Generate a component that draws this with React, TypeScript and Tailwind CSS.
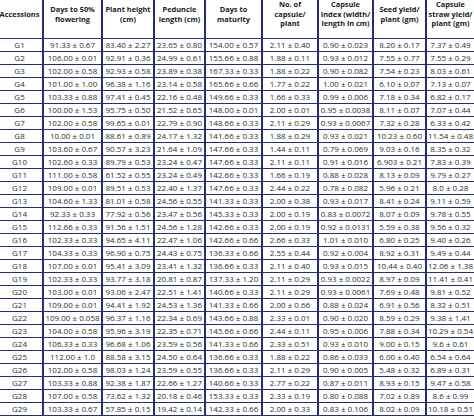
const GRID = 'grid grid-cols-[47px_59px_52px_51px_57px_56px_55px_53px_49px]';

const HEADERS: string[][] = [
  ['Accessions'],
  ['Days to 50%', 'flowering'],
  ['Plant height', '(cm)'],
  ['Peduncle', 'length (cm)'],
  ['Days to', 'maturity'],
  ['No. of', 'capsule/', 'plant'],
  ['Capsule', 'Index (width/', 'length in cm)'],
  ['Seed yield/', 'plant (gm)'],
  ['Capsule', 'straw yield/', 'plant (gm)'],
];

const ROWS: string[][] = [
  ['91.33 ± 0.67', '83.40 ± 2.27', '23.65 ± 0.80', '154.00 ± 0.57', '2.11 ± 0.40', '0.90 ± 0.023', '8.20 ± 0.17', '7.37 ± 0.49'],
  ['106.00 ± 0.01', '92.91 ± 0.36', '24.99 ± 0.61', '155.66 ± 0.88', '1.88 ± 0.11', '0.93 ± 0.012', '7.55 ± 0.77', '7.55 ± 0.29'],
  ['102.00 ± 0.58', '92.93 ± 0.58', '23.89 ± 0.38', '167.33 ± 0.33', '1.88 ± 0.22', '0.90 ± 0.082', '7.54 ± 0.23', '8.03 ± 0.61'],
  ['101.00 ± 1.00', '96.38 ± 1.16', '23.14 ± 0.58', '165.66 ± 0.66', '1.77 ± 0.22', '1.00 ± 0.021', '6.10 ± 0.07', '7.13 ± 0.07'],
  ['103.33 ± 0.88', '97.41 ± 0.45', '22.16 ± 0.48', '149.66 ± 0.33', '1.66 ± 0.33', '0.99 ± 0.006', '7.18 ± 0.34', '6.82 ± 0.17'],
  ['100.00 ± 1.53', '95.75 ± 0.50', '21.52 ± 0.65', '148.00 ± 0.01', '2.00 ± 0.01', '0.95 ± 0.0038', '8.11 ± 0.07', '7.07 ± 0.44'],
  ['102.00 ± 0.58', '99.65 ± 0.01', '22.79 ± 0.90', '148.66 ± 0.33', '2.11 ± 0.29', '0.93 ± 0.0067', '7.32 ± 0.28', '6.33 ± 0.42'],
  ['10.00 ± 0.01', '88.61 ± 0.89', '24.17 ± 1.32', '141.66 ± 0.33', '1.88 ± 0.29', '0.93 ± 0.021', '10.23 ± 0.60', '11.54 ± 0.48'],
  ['103.60 ± 0.67', '90.57 ± 3.23', '21.64 ± 1.09', '147.66 ± 0.33', '1.44 ± 0.11', '0.79 ± 0.069', '9.03 ± 0.16', '8.35 ± 0.32'],
  ['102.60 ± 0.33', '89.79 ± 0.53', '23.24 ± 0.47', '147.66 ± 0.33', '2.11 ± 0.11', '0.91 ± 0.016', '6.903 ± 0.21', '7.83 ± 0.39'],
  ['111.00 ± 0.58', '61.52 ± 0.55', '23.24 ± 0.49', '142.66 ± 0.33', '1.66 ± 0.19', '0.88 ± 0.028', '8.13 ± 0.09', '9.79 ± 0.27'],
  ['109.00 ± 0.01', '89.51 ± 0.53', '22.40 ± 1.37', '147.66 ± 0.33', '2.44 ± 0.22', '0.78 ± 0.082', '5.96 ± 0.21', '8.0 ± 0.28'],
  ['104.60 ± 1.33', '81.01 ± 0.58', '24.56 ± 0.55', '141.33 ± 0.33', '2.00 ± 0.38', '0.93 ± 0.017', '8.41 ± 0.24', '9.11 ± 0.59'],
  ['92.33 ± 0.33', '77.92 ± 0.56', '23.47 ± 0.56', '145.33 ± 0.33', '2.00 ± 0.19', '0.83 ± 0.0072', '8.07 ± 0.09', '9.78 ± 0.55'],
  ['112.66 ± 0.33', '91.56 ± 1.51', '24.56 ± 1.28', '142.66 ± 0.33', '2.00 ± 0.19', '0.92 ± 0.0131', '5.59 ± 0.38', '9.56 ± 0.32'],
  ['102.33 ± 0.33', '94.65 ± 4.11', '22.47 ± 1.06', '142.66 ± 0.66', '2.66 ± 0.33', '1.01 ± 0.010', '6.80 ± 0.25', '9.40 ± 0.26'],
  ['104.33 ± 0.33', '96.90 ± 0.75', '24.43 ± 0.75', '136.33 ± 0.66', '2.55 ± 0.44', '0.92 ± 0.004', '8.92 ± 0.31', '9.49 ± 0.44'],
  ['107.00 ± 0.01', '95.41 ± 3.09', '23.41 ± 1.32', '136.66 ± 0.33', '2.11 ± 0.40', '0.93 ± 0.015', '10.44 ± 0.40', '12.06 ± 1.38'],
  ['102.33 ± 0.33', '93.77 ± 3.18', '20.81 ± 0.87', '137.33 ± 1.20', '2.11 ± 0.29', '0.93 ± 0.0022', '8.97 ± 0.09', '11.41 ± 0.41'],
  ['103.00 ± 0.01', '93.06 ± 2.47', '22.51 ± 1.41', '140.66 ± 0.33', '2.11 ± 0.29', '0.93 ± 0.0061', '7.69 ± 0.48', '9.81 ± 0.52'],
  ['109.00 ± 0.01', '94.41 ± 1.92', '24.53 ± 1.36', '141.33 ± 0.66', '2.00 ± 0.66', '0.88 ± 0.024', '6.91 ± 0.56', '8.32 ± 0.51'],
  ['109.00 ± 0.058', '96.37 ± 1.16', '22.34 ± 0.69', '143.66 ± 0.88', '2.33 ± 0.01', '0.90 ± 0.020', '8.59 ± 0.29', '9.38 ± 1.41'],
  ['104.00 ± 0.58', '95.96 ± 3.19', '22.35 ± 0.71', '145.66 ± 0.66', '2.44 ± 0.11', '0.95 ± 0.006', '7.88 ± 0.34', '10.29 ± 0.54'],
  ['106.33 ± 0.33', '96.68 ± 1.06', '23.59 ± 0.56', '141.33 ± 0.66', '2.33 ± 0.51', '0.93 ± 0.010', '9.00 ± 0.15', '9.6 ± 0.61'],
  ['112.00 ± 1.0', '88.58 ± 3.15', '24.50 ± 0.64', '136.66 ± 0.33', '1.88 ± 0.22', '0.86 ± 0.033', '6.00 ± 0.40', '6.54 ± 0.64'],
  ['102.00 ± 0.58', '98.03 ± 1.24', '23.59 ± 0.55', '136.66 ± 0.33', '2.11 ± 0.29', '0.90 ± 0.005', '5.48 ± 0.32', '6.89 ± 0.31'],
  ['103.33 ± 0.88', '92.38 ± 1.87', '22.66 ± 1.27', '140.66 ± 0.33', '2.77 ± 0.22', '0.87 ± 0.011', '8.93 ± 0.15', '9.47 ± 0.58'],
  ['107.00 ± 0.58', '73.62 ± 1.32', '20.18 ± 0.46', '153.33 ± 0.33', '2.33 ± 0.19', '0.80 ± 0.088', '7.02 ± 0.89', '8.6 ± 0.99'],
  ['103.33 ± 0.67', '57.85 ± 0.15', '19.42 ± 0.14', '142.33 ± 0.66', '2.00 ± 0.33', '0.83 ± 0.106', '8.02 ± 0.09', '10.18 ± 0.51'],
];

const cellBase =
  'flex items-center justify-center whitespace-nowrap border-r-2 border-[#272c74]';

export default function App() {
  return (
    <div className="w-[474px] h-[416px] overflow-hidden bg-white font-['Open_Sans',sans-serif]">
      <div className="-ml-[3px] -mt-[9px] w-max">
        {/* Header */}
        <div className={`${GRID} h-[48px] border-b border-[#272c74]`}>
          {HEADERS.map((lines, i) => (
            <div
              key={i}
              className={`${cellBase} flex-col text-center text-[7.4px] font-bold leading-[9.5px] text-[#1a1a1a]`}
            >
              {lines.map((l) => (
                <span key={l}>{l}</span>
              ))}
            </div>
          ))}
        </div>

        {/* Body rows */}
        {ROWS.map((row, r) => (
          <div
            key={r}
            className={`${GRID} h-[13px] border-b border-[#272c74] text-[8px] leading-none text-[#2e2e2e]`}
          >
            <div className={cellBase}>G{r + 1}</div>
            {row.map((v, c) => (
              <div key={c} className={cellBase}>
                {v}
              </div>
            ))}
          </div>
        ))}
      </div>
    </div>
  );
}
